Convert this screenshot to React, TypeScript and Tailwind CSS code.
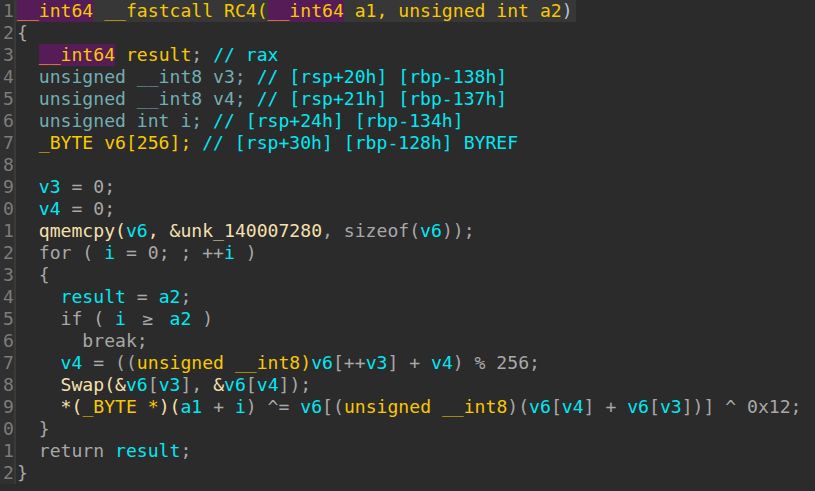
type Tok = [string, string];

const Y = "text-[#f8c800]";
const C = "text-[#00e8f2]";
const G = "text-[#a8a8a8]";
const T = "text-[#74aeb2]";
const P = "text-[#f6e0ae]";
const H = "text-[#f8c800] bg-[#561c58] inline-block h-[22px]";
const GE = "text-[#a8a8a8] inline-block w-[2ch] text-center";

const lines: Tok[][] = [
  [[ "__int64", H ], [ " __fastcall RC4(", Y ], [ "__int64", H ], [ " a1, unsigned int a2", Y ], [ ")", "text-[#b4c4dc]" ]],
  [[ "{", G ]],
  [[ "  ", G ], [ "__int64", H ], [ " result", Y ], [ ";", G ], [ " // rax", C ]],
  [[ "  unsigned __int8 v3;", T ], [ " // [rsp+20h] [rbp-138h]", C ]],
  [[ "  unsigned __int8 v4;", T ], [ " // [rsp+21h] [rbp-137h]", C ]],
  [[ "  unsigned int i;", T ], [ " // [rsp+24h] [rbp-134h]", C ]],
  [[ "  _BYTE v6[256];", Y ], [ " // [rsp+30h] [rbp-128h] BYREF", C ]],
  [],
  [[ "  ", G ], [ "v3", C ], [ " = 0;", G ]],
  [[ "  ", G ], [ "v4", C ], [ " = 0;", G ]],
  [[ "  qmemcpy(", P ], [ "v6", C ], [ ", &unk_140007280", P ], [ ", sizeof(", G ], [ "v6", C ], [ "));", G ]],
  [[ "  for ( ", G ], [ "i", C ], [ " = 0; ; ++", G ], [ "i", C ], [ " )", G ]],
  [[ "  {", G ]],
  [[ "    ", G ], [ "result", C ], [ " = ", G ], [ "a2", C ], [ ";", G ]],
  [[ "    if ( ", G ], [ "i", C ], [ " ", G ], [ "\u2265", GE ], [ " ", G ], [ "a2", C ], [ " )", G ]],
  [[ "      break;", G ]],
  [[ "    ", G ], [ "v4", C ], [ " = ((", G ], [ "unsigned __int8)", Y ], [ "v6", C ], [ "[++", G ], [ "v3", C ], [ "] + ", G ], [ "v4", C ], [ ") % 256;", G ]],
  [[ "    Swap(&", P ], [ "v6", C ], [ "[", G ], [ "v3", C ], [ "], ", G ], [ "&", P ], [ "v6", C ], [ "[", G ], [ "v4", C ], [ "]);", G ]],
  [[ "    *(", P ], [ "_BYTE *", Y ], [ ")(", P ], [ "a1", C ], [ " + ", G ], [ "i", C ], [ ") ^= ", G ], [ "v6", C ], [ "[(", G ], [ "unsigned __int8", Y ], [ ")(", G ], [ "v6", C ], [ "[", G ], [ "v4", C ], [ "] + ", G ], [ "v6", C ], [ "[", G ], [ "v3", C ], [ "])] ^ 0x12;", G ]],
  [[ "  }", G ]],
  [[ "  return ", G ], [ "result", C ], [ ";", G ]],
  [[ "}", G ]],
];

export default function App() {
  return (
    <div
      className="w-[815px] h-[491px] overflow-hidden bg-[#2b2b2b] text-[18.1px] leading-[22px]"
      style={{ fontFamily: '"DejaVu Sans Mono", "Liberation Mono", monospace' }}
    >
      {lines.map((toks, i) => (
        <div key={i} className="flex h-[22px]">
          <div className="w-[14px] shrink-0 flex justify-end bg-[#303030] text-[#7c7c7c] border-r-[2px] border-[#3a3a3a] box-content">
            <span>{String(i + 1).slice(-1)}</span>
          </div>
          <div className={"pl-[1px] whitespace-pre " + (i === 0 ? "bg-[#373737] pr-[3px]" : "")}>
            {toks.map(([t, cls], j) => (
              <span key={j} className={cls}>
                {t}
              </span>
            ))}
          </div>
        </div>
      ))}
    </div>
  );
}
